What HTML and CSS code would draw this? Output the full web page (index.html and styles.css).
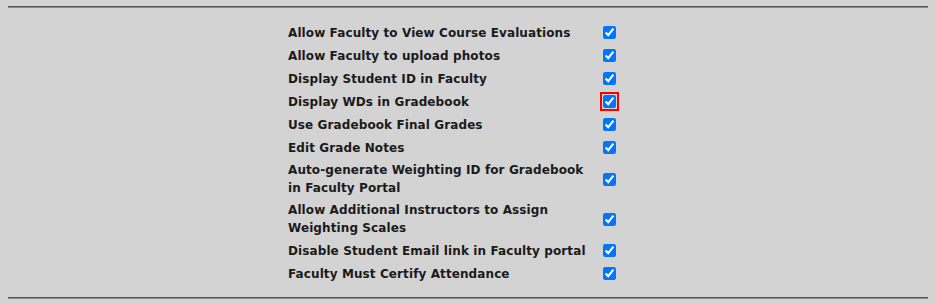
FILE: index.html
```html
<!DOCTYPE html>
<html lang="en">
<head>
  <meta charset="UTF-8" />
  <title>Faculty Settings</title>
  <link rel="stylesheet" href="styles.css">
</head>
<body>
  <hr class="rule">

  <table class="settings">
    <tr>
      <td class="label">Allow Faculty to View Course Evaluations</td>
      <td class="check"><input type="checkbox" checked></td>
    </tr>
    <tr>
      <td class="label">Allow Faculty to upload photos</td>
      <td class="check"><input type="checkbox" checked></td>
    </tr>
    <tr>
      <td class="label">Display Student ID in Faculty</td>
      <td class="check"><input type="checkbox" checked></td>
    </tr>
    <tr>
      <td class="label">Display WDs in Gradebook</td>
      <td class="check"><input type="checkbox" class="focused" checked></td>
    </tr>
    <tr>
      <td class="label">Use Gradebook Final Grades</td>
      <td class="check"><input type="checkbox" checked></td>
    </tr>
    <tr>
      <td class="label">Edit Grade Notes</td>
      <td class="check"><input type="checkbox" checked></td>
    </tr>
    <tr>
      <td class="label">Auto-generate Weighting ID for Gradebook in Faculty Portal</td>
      <td class="check"><input type="checkbox" checked></td>
    </tr>
    <tr>
      <td class="label">Allow Additional Instructors to Assign Weighting Scales</td>
      <td class="check"><input type="checkbox" checked></td>
    </tr>
    <tr>
      <td class="label">Disable Student Email link in Faculty portal</td>
      <td class="check"><input type="checkbox" checked></td>
    </tr>
    <tr>
      <td class="label">Faculty Must Certify Attendance</td>
      <td class="check"><input type="checkbox" checked></td>
    </tr>
  </table>

  <hr class="rule">
</body>
</html>
```

FILE: styles.css
```css
body {
  margin: 6px 8px;
  background: #d3d3d3;
  font-family: "DejaVu Sans", sans-serif;
  font-size: 12px;
  font-weight: bold;
  letter-spacing: 0.1px;
  color: #1a1a1a;
}

.rule {
  margin: 0;
  height: 0;
  border: none;
  border-top: 1px solid #555;
  border-bottom: 1px solid #8a8a8a;
}

.settings {
  margin: 12px 0 11px 277px;
  border-spacing: 2px;
}

.settings td {
  padding: 1px;
  line-height: 18px;
  vertical-align: middle;
}

.label {
  width: 307px;
  padding-left: 0;
}

.check {
  width: 44px;
}

.check input {
  display: block;
  margin: 3px 3px 3px 4px;
  width: 13px;
  height: 13px;
}

.check input.focused {
  outline: 2px solid #f00;
  outline-offset: 1px;
}
```
